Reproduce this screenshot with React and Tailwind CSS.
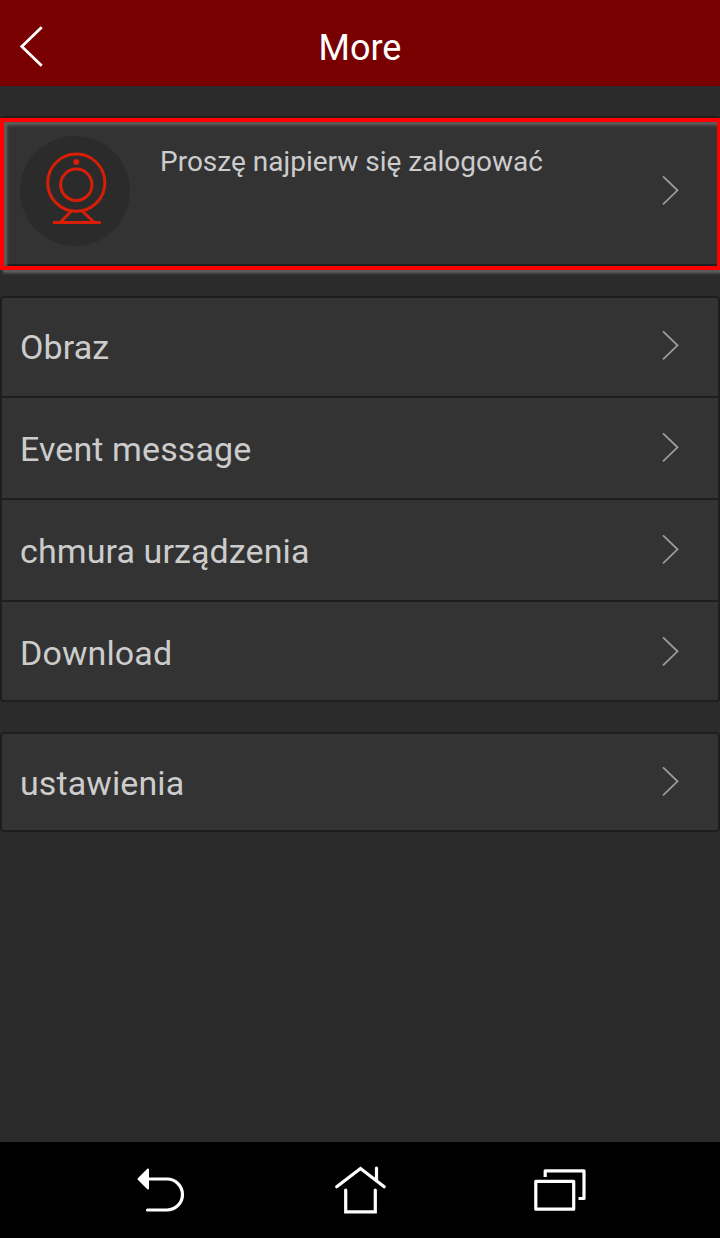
function Chevron() {
    return (
        <svg width="20" height="32" viewBox="0 0 20 32" fill="none" className="shrink-0">
            <path d="M3 2.3 L17.500 16.3 L3 30.3" stroke="#9c9c9c" strokeWidth="1.8" />
        </svg>
    )
}

function Header() {
    return (
        <header className="relative flex h-[86px] items-center justify-center bg-[#780000] pt-2.5">
            <button className="absolute top-[24px] left-[18px]">
                <svg width="28" height="44" viewBox="0 0 28 44" fill="none">
                    <path d="M23.7 3.2 L3.8 22.5 L23.7 41.8" stroke="#fff" strokeWidth="2.8" />
                </svg>
            </button>
            <h1 className="text-[36px] leading-[42px] text-white">More</h1>
        </header>
    )
}

function Camera() {
    return (
        <div className="h-[110px] w-[110px] shrink-0 rounded-full bg-[#2b2b2b]">
            <svg width="110" height="110" viewBox="0 0 110 110" fill="none" stroke="#d81e06" strokeWidth="3">
                <circle cx="56.3" cy="46.7" r="28.6" />
                <circle cx="56.3" cy="48.8" r="15.7" />
                <circle cx="56.3" cy="26" r="3" fill="#d81e06" stroke="none" />
                <path d="M51.5 75 L40.5 86 M62 75 L74 86" />
                <path d="M34 86.6 H79.5" strokeLinecap="round" />
            </svg>
        </div>
    )
}

function Login() {
    return (
        <div className="relative mt-[30px]">
            <div className="flex h-[150px] rounded-sm border-2 border-[#1e1e1e] bg-[#333333] pt-[18px] pr-[38px] pl-[18px]">
                <Camera />
                <p className="mt-[9px] ml-[30px] flex-1 text-[28px] leading-[33px]">Proszę najpierw się zalogować</p>
                <div className="mt-[38px]">
                    <Chevron />
                </div>
            </div>
            {/* highlight around the login card */}
            <div className="absolute top-[2px] left-0 h-[152px] w-[721px] border-4 border-[#ff0000] drop-shadow-[3px_3px_1.5px_#646464]" />
        </div>
    )
}

function Row({ label }) {
    return (
        <li className="flex h-[102px] justify-between border-b-2 border-[#1e1e1e] pr-[38px] pl-[18px] first:h-[100px] first:pt-0 last:h-[98px] last:border-b-0 [&:not(:first-child)]:pt-[2px]">
            <span className="mt-[29px] text-[34px] leading-[40px] tracking-[0.1px]">{label}</span>
            <span className="mt-[31px]">
                <Chevron />
            </span>
        </li>
    )
}

function Menu({ items, className }) {
    return (
        <ul className={className}>
            {items.map((item) => (
                <Row key={item} label={item} />
            ))}
        </ul>
    )
}

function NavBar() {
    return (
        <nav className="flex h-24 justify-between bg-black px-[130px]">
            <svg width="60" height="96" viewBox="130 1142 60 96" fill="none" stroke="#fff" strokeWidth="3.2">
                <path d="M147 1179 H167 A15.5 15.5 0 0 1 167 1210 H147.500" strokeLinecap="round" />
                <path d="M138.500 1179 L148 1169.500 V1188.500 Z" fill="#fff" strokeWidth="2" strokeLinejoin="round" />
            </svg>
            <svg width="60" height="96" viewBox="330 1142 60 96" fill="none" stroke="#fff" strokeWidth="3.2">
                <path d="M336.700 1186.800 L360.500 1168.500 L384.200 1186.800 M376.500 1168 V1180" strokeLinecap="round" />
                <path d="M345.700 1190 V1211.800 H375.300 V1190" strokeLinecap="round" />
            </svg>
            <svg width="60" height="96" viewBox="530 1142 60 96" fill="none" stroke="#fff" strokeWidth="3.2">
                <path d="M535.800 1181.300 H573.700 V1209.200 H535.800 Z" strokeLinejoin="round" />
                <path d="M545.200 1177 V1170.800 H584 V1198.500 H578.500" strokeLinejoin="round" />
            </svg>
        </nav>
    )
}

export default function App() {
    return (
        <div className="flex h-[1238px] w-[720px] flex-col overflow-hidden bg-[#2b2b2b] font-[Roboto,sans-serif] text-[#cccccc]">
            <Header />
            <main className="flex-1">
                <Login />
                <Menu
                    items={['Obraz', 'Event message', 'chmura urządzenia', 'Download']}
                    className="mt-[30px] rounded-sm border-2 border-[#1e1e1e] bg-[#333333]"
                />
                <Menu items={['ustawienia']} className="mt-[30px] h-[100px] rounded-sm border-2 border-[#1e1e1e] bg-[#333333]" />
            </main>
            <NavBar />
        </div>
    )
}
